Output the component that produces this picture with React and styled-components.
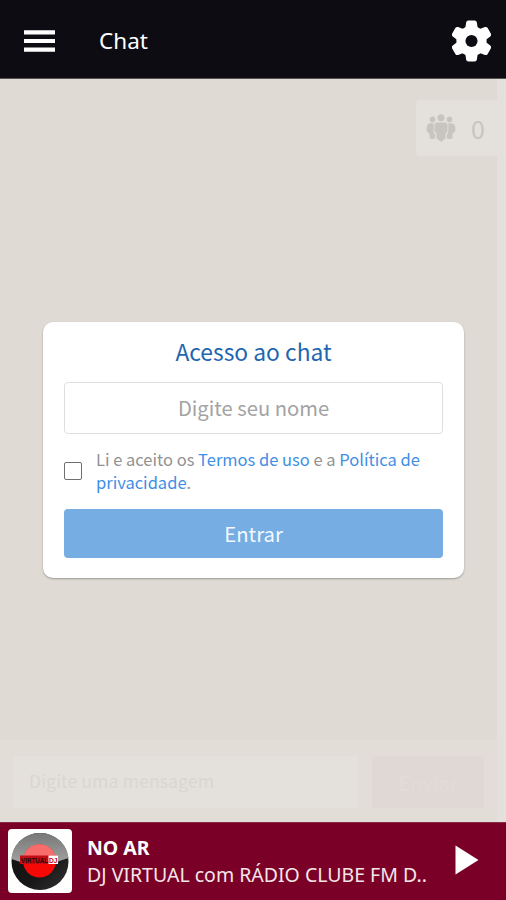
import React from "react";
import styled, { createGlobalStyle } from "styled-components";

const GlobalStyle = createGlobalStyle`
  *, *::before, *::after { box-sizing: border-box; }
  body { margin: 0; background: #dfdad4; }
`;

const Screen = styled.div`
  position: relative;
  width: 506px;
  height: 900px;
  display: flex;
  flex-direction: column;
  overflow: hidden;
  background: #dfdad4;
  font-family: "Noto Sans CJK SC", "Noto Sans", sans-serif;
`;

const Header = styled.header`
  flex: none;
  height: 79px;
  display: flex;
  align-items: center;
  padding: 3px 15px 0 24px;
  background: #0d0c12;
  border-bottom: 1px solid #56534f;
  color: #fff;
`;

const IconButton = styled.button`
  display: flex;
  padding: 0;
  border: 0;
  background: none;
  color: inherit;
`;

const PlayButton = styled(IconButton)`
  margin-bottom: 2px;
`;

const PageTitle = styled.h1`
  flex: 1;
  margin: 0 0 0 44px;
  font: 400 22.5px/32px "Noto Sans", sans-serif;
`;

const ChatArea = styled.main`
  flex: none;
  height: 743px;
  display: flex;
  flex-direction: column;
  border-right: 9px solid #e4e0dc;
`;

const OnlineCount = styled.div`
  align-self: flex-end;
  display: flex;
  align-items: center;
  gap: 15px;
  width: 81px;
  height: 56px;
  margin-top: 21px;
  padding-left: 10px;
  border-radius: 4px 0 0 4px;
  background: #e4e0dc;
  color: #c8c5bf;
  font-size: 25px;
  line-height: 54px;
`;

const Composer = styled.div`
  margin-top: auto;
  display: flex;
  gap: 14px;
  height: 82px;
  padding: 16px 13px 14px 13px;
  background: #e2ddd7;
`;

const MessageBox = styled.div`
  flex: 1;
  padding-left: 16px;
  border-radius: 3px;
  background: #e4e1dc;
  color: #d9d6d1;
  font-size: 17.8px;
  line-height: 49px;
`;

const SendButton = styled.button`
  width: 112px;
  padding: 2px 0 0;
  border: 0;
  border-radius: 3px;
  background: #e0d8d5;
  color: #e2dcd6;
  font: 400 20px/50px "Noto Sans CJK SC", sans-serif;
`;

const Dialog = styled.form`
  position: absolute;
  left: 43px;
  top: 322px;
  width: 421px;
  height: 256px;
  display: flex;
  flex-direction: column;
  padding: 14px 21px 20px;
  border-radius: 10px;
  background: #fff;
  box-shadow: 0 1px 2px rgba(0, 0, 0, 0.3);
`;

const DialogTitle = styled.h2`
  margin: 0 0 14px;
  text-align: center;
  color: #1f66b0;
  font-size: 22.8px;
  font-weight: 400;
  line-height: 32px;
`;

const NameInput = styled.input`
  width: 100%;
  height: 52px;
  padding: 0 0 1px;
  border: 1px solid #dedede;
  border-radius: 4px;
  outline: 0;
  text-align: center;
  font: 400 20.2px/30px "Noto Sans CJK SC", sans-serif;
  &::placeholder { color: #a3a3a3; opacity: 1; }
`;

const Consent = styled.label`
  display: flex;
  align-items: center;
  gap: 14px;
  margin: 14px 0 15px;
  color: #929292;
  font-size: 16.5px;
  line-height: 23px;
`;

const Checkbox = styled.input`
  appearance: none;
  flex: none;
  width: 18px;
  height: 18px;
  margin: 0;
  border: 1px solid #6f6f6f;
  border-radius: 2px;
  background: #fff;
`;

const TermsLink = styled.a`
  color: #3f8fe6;
`;

const EnterButton = styled.button`
  height: 49px;
  padding: 0 0 1px;
  border: 0;
  border-radius: 4px;
  background: #76ade3;
  color: #f4f9ff;
  font: 400 20.3px/48px "Noto Sans CJK SC", sans-serif;
`;

const Player = styled.footer`
  flex: none;
  height: 78px;
  display: flex;
  align-items: center;
  padding: 0 27px 2px 8px;
  border-top: 1px solid #8a2b43;
  background: #7b0027;
  color: #f4e6e7;
`;

const Cover = styled.div`
  width: 64px;
  height: 64px;
  border-radius: 4px;
  background: #fff;
  overflow: hidden;
`;

const TrackInfo = styled.div`
  flex: 1;
  margin-left: 15px;
  white-space: nowrap;
  font: 400 19.5px/27px "Noto Sans", sans-serif;
`;

const OnAir = styled.div`
  color: #fff;
  font-weight: 700;
  font-size: 19.5px;
`;

const Track = styled.div`
  color: #f4e6e7;
`;

const MenuIcon = () => (
  <svg width="31" height="22" viewBox="0 0 31 22" fill="currentColor">
    <path d="M0 .3h31v4.2H0zM0 8.9h31v4.2H0zM0 17.5h31v4.2H0z" />
  </svg>
);

const GearIcon = () => (
  <svg width="39" height="42" viewBox="-20 -21 40 42">
    <g fill="#fff">
      <circle r="15.5" />
      {[0, 60, 120].map((angle) => (
        <path
          key={angle}
          transform={`rotate(${angle})`}
          d="M-3.2-21h6.4q2 0 2.3 2l.8 5.500v27L5.500 19q-.3 2-2.300 2h-6.400q-2 0-2.300-2l-.8-5.500v-27L-5.500-19q.3-2 2.300-2z"
        />
      ))}
    </g>
    <circle r="6.200" fill="#0d0c12" />
  </svg>
);

const GroupIcon = () => (
  <svg width="30" height="28" viewBox="0 0 30 28" fill="currentColor">
    <circle cx="15" cy="3.800" r="3.500" />
    <circle cx="6.500" cy="5.400" r="2.800" />
    <circle cx="23.500" cy="5.400" r="2.800" />
    <path d="M11 8.500h8q2.500 0 2.500 2.500v6q0 2-2 2.200V24q0 1.500-1.500 1.500h-.7q-.3 2-2.300 2t-2.300-2H12q-1.500 0-1.500-1.500v-4.800q-2-.2-2-2.200v-6q0-2.500 2.500-2.500z" />
    <path d="M3.500 9.200h4.200v9.200q0 1 1.500 1.800v3q0 1.800-1.800 1.800H5.500q-2 0-2-2v-3.500Q.5 18 .5 15q0-4 3-5.800zM26.500 9.200h-4.200v9.200q0 1-1.500 1.800v3q0 1.800 1.800 1.800h1.900q2 0 2-2v-3.500q3-1.500 3-4.500 0-4-3-5.800z" />
  </svg>
);

const DiscLogo = () => (
  <svg width="64" height="64" viewBox="0 0 64 64">
    <defs>
      <linearGradient id="discTop" x1="0" y1="0" x2="0" y2="1">
        <stop offset="0" stopColor="#777" />
        <stop offset="1" stopColor="#a5a5a5" />
      </linearGradient>
      <linearGradient id="discBase" x1="0" y1="0" x2="1" y2="1">
        <stop offset="0" stopColor="#111" />
        <stop offset=".6" stopColor="#171717" />
        <stop offset="1" stopColor="#333" />
      </linearGradient>
    </defs>
    <circle cx="32" cy="32.500" r="28.500" fill="url(#discBase)" />
    <path d="M3.600 30C4.500 15 17 4 32 4s27.500 11 28.500 25Q52 31 44 36 24 38 3.600 30z" fill="url(#discTop)" />
    <circle cx="31.500" cy="32" r="16.500" fill="#f50806" />
    <path d="M15.300 28.500a16.500 16.500 0 0 1 32.400 0z" fill="#f96c6c" />
    <path d="M12 26.500h38V35H12z" fill="#c20f15" />
    <path d="M40.500 26.500h9.500V35h-9.500z" fill="#fff" />
    <text x="13" y="33.500" textLength="27" lengthAdjust="spacingAndGlyphs" fontFamily="Liberation Sans" fontWeight="700" fontSize="7.500" fill="#25060a">VIRTUAL</text>
    <text x="41" y="33.500" textLength="8.500" lengthAdjust="spacingAndGlyphs" fontFamily="Liberation Sans" fontWeight="700" fontSize="7.500" fill="#c3000e">DJ</text>
  </svg>
);

const PlayIcon = () => (
  <svg width="24" height="30" viewBox="0 0 24 30" fill="#fff">
    <path d="M.5.500 23.500 15 .5 29.500z" />
  </svg>
);

export default function App() {
  return (
    <>
      <GlobalStyle />
      <Screen>
        <Header>
          <IconButton aria-label="Menu"><MenuIcon /></IconButton>
          <PageTitle>Chat</PageTitle>
          <IconButton aria-label="Configurações"><GearIcon /></IconButton>
        </Header>
        <ChatArea>
          <OnlineCount><GroupIcon /><span>0</span></OnlineCount>
          <Composer>
            <MessageBox>Digite uma mensagem</MessageBox>
            <SendButton>Enviar</SendButton>
          </Composer>
        </ChatArea>
        <Player>
          <Cover><DiscLogo /></Cover>
          <TrackInfo>
            <OnAir>NO AR</OnAir>
            <Track>DJ VIRTUAL com RÁDIO CLUBE FM D..</Track>
          </TrackInfo>
          <PlayButton aria-label="Tocar"><PlayIcon /></PlayButton>
        </Player>
        <Dialog>
          <DialogTitle>Acesso ao chat</DialogTitle>
          <NameInput placeholder="Digite seu nome" />
          <Consent>
            <Checkbox type="checkbox" />
            <span>
              Li e aceito os <TermsLink>Termos de uso</TermsLink> e a <TermsLink>Política de privacidade</TermsLink>.
            </span>
          </Consent>
          <EnterButton type="button">Entrar</EnterButton>
        </Dialog>
      </Screen>
    </>
  );
}
